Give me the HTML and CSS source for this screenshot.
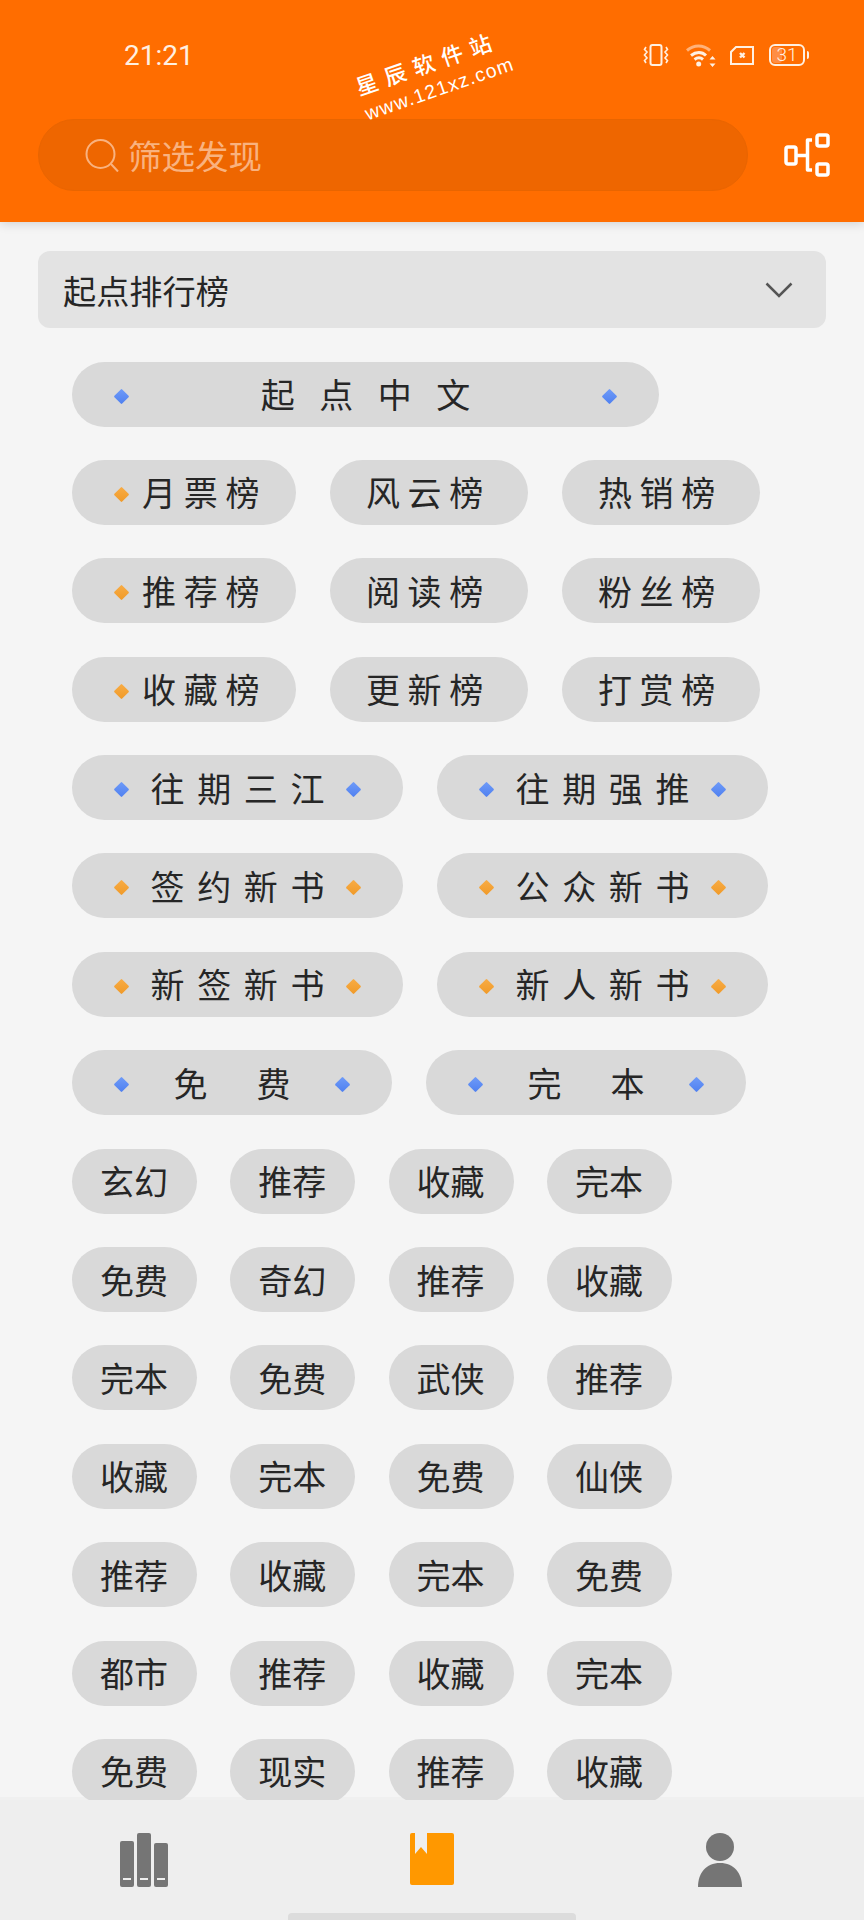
FILE: index.html
```html
<!DOCTYPE html>
<html>
<head>
    <meta charset="UTF-8">
    <title>筛选发现</title>
    <link rel="stylesheet" href="styles.css">
</head>
<body>
    <div class="header">
        <div class="status-bar">
            <span class="status-time">21:21</span>
            <div class="status-icons">
                <svg class="icon-vibrate" width="26" height="22" viewBox="0 0 26 22" fill="none" stroke="#fff0e2" stroke-width="2">
                    <rect x="7.500" y="1" width="11" height="20" rx="2"/>
                    <path d="M3 3l-1.500 2.500 2.500 2.500-2.500 3 2.500 3-2.500 2.500 1.500 2.500M23 3l1.500 2.500-2.500 2.500 2.500 3-2.500 3 2.500 2.500-1.500 2.500" stroke-width="1.600"/>
                </svg>
                <svg class="icon-wifi" width="31" height="23" viewBox="0 0 31 23" fill="none" stroke="#fff0e2" stroke-width="3">
                    <path d="M1 6.500C8 .5 17 .5 24 6.500" stroke="#ffb27a"/>
                    <path d="M5 11.500c5-4 11-4 15 0M8.500 15.500c3-2.200 6-2.200 8.500 0"/>
                    <circle cx="12.700" cy="20" r="2.500" fill="#fff0e2" stroke="none"/>
                    <path d="M26.500 12l3 3.500h-6zM26.500 23l-3-3.500h6z" fill="#fff0e2" stroke="none"/>
                </svg>
                <svg class="icon-sim" width="24" height="19" viewBox="0 0 24 19" fill="none" stroke="#fff0e2" stroke-width="2">
                    <path d="M6 1h17v17H1V6z"/>
                    <path d="M10 7l4.500 4.500M14.500 7L10 11.500" stroke-width="2.400"/>
                </svg>
                <div class="battery">
                    <div class="battery-fill" style="width: 31%"></div>
                    <span class="battery-level">31</span>
                </div>
            </div>
        </div>
        <div class="search-row">
            <div class="search-box">
                <svg class="search-icon" width="34" height="33" viewBox="0 0 34 33" fill="none" stroke="#f9b27f" stroke-width="2">
                    <circle cx="15.500" cy="15" r="14"/>
                    <path d="M26 25l7 7.500"/>
                </svg>
                <span class="search-text">筛选发现</span>
            </div>
            <svg class="tree-icon" width="46" height="44" viewBox="0 0 46 44" fill="none" stroke="#fff" stroke-width="3.500" stroke-linejoin="round">
                <rect x="2" y="14" width="10" height="17" rx="2"/>
                <rect x="33" y="2" width="11" height="11" rx="2"/>
                <rect x="33" y="31" width="11" height="11" rx="2"/>
                <path d="M28 7h-4.500v30H28M12 22.500h11.500"/>
            </svg>
        </div>
    </div>

    <div class="watermark">
        <div class="watermark-name">星辰软件站</div>
        <div class="watermark-url">www.121xz.com</div>
    </div>

    <div class="content">
        <div class="select-box">
            <span>起点排行榜</span>
            <svg width="28" height="16" viewBox="0 0 28 16" fill="none" stroke="#555" stroke-width="2.500">
                <path d="M1.500 1.500L14 14 26.500 1.500"/>
            </svg>
        </div>

        <div class="pill-list">
            <div class="pill-row">
                <div class="pill pill-full"><i class="mark blue"></i><span class="spaced-4">起点中文</span><i class="mark blue"></i></div>
            </div>
            <div class="pill-row">
                <div class="pill pill-lead"><i class="mark orange"></i><span class="spaced-1">月票榜</span></div>
                <div class="pill pill-three"><span class="spaced-1">风云榜</span></div>
                <div class="pill pill-three"><span class="spaced-1">热销榜</span></div>
            </div>
            <div class="pill-row">
                <div class="pill pill-lead"><i class="mark orange"></i><span class="spaced-1">推荐榜</span></div>
                <div class="pill pill-three"><span class="spaced-1">阅读榜</span></div>
                <div class="pill pill-three"><span class="spaced-1">粉丝榜</span></div>
            </div>
            <div class="pill-row">
                <div class="pill pill-lead"><i class="mark orange"></i><span class="spaced-1">收藏榜</span></div>
                <div class="pill pill-three"><span class="spaced-1">更新榜</span></div>
                <div class="pill pill-three"><span class="spaced-1">打赏榜</span></div>
            </div>
            <div class="pill-row">
                <div class="pill pill-half"><i class="mark blue"></i><span class="spaced-2">往期三江</span><i class="mark blue"></i></div>
                <div class="pill pill-half"><i class="mark blue"></i><span class="spaced-2">往期强推</span><i class="mark blue"></i></div>
            </div>
            <div class="pill-row">
                <div class="pill pill-half"><i class="mark orange"></i><span class="spaced-2">签约新书</span><i class="mark orange"></i></div>
                <div class="pill pill-half"><i class="mark orange"></i><span class="spaced-2">公众新书</span><i class="mark orange"></i></div>
            </div>
            <div class="pill-row">
                <div class="pill pill-half"><i class="mark orange"></i><span class="spaced-2">新签新书</span><i class="mark orange"></i></div>
                <div class="pill pill-half"><i class="mark orange"></i><span class="spaced-2">新人新书</span><i class="mark orange"></i></div>
            </div>
            <div class="pill-row">
                <div class="pill pill-pair"><i class="mark blue"></i><span class="spaced-3">免费</span><i class="mark blue"></i></div>
                <div class="pill pill-pair"><i class="mark blue"></i><span class="spaced-3">完本</span><i class="mark blue"></i></div>
            </div>
            <div class="pill-row small-row">
                <div class="pill pill-small">玄幻</div>
                <div class="pill pill-small">推荐</div>
                <div class="pill pill-small">收藏</div>
                <div class="pill pill-small">完本</div>
            </div>
            <div class="pill-row small-row">
                <div class="pill pill-small">免费</div>
                <div class="pill pill-small">奇幻</div>
                <div class="pill pill-small">推荐</div>
                <div class="pill pill-small">收藏</div>
            </div>
            <div class="pill-row small-row">
                <div class="pill pill-small">完本</div>
                <div class="pill pill-small">免费</div>
                <div class="pill pill-small">武侠</div>
                <div class="pill pill-small">推荐</div>
            </div>
            <div class="pill-row small-row">
                <div class="pill pill-small">收藏</div>
                <div class="pill pill-small">完本</div>
                <div class="pill pill-small">免费</div>
                <div class="pill pill-small">仙侠</div>
            </div>
            <div class="pill-row small-row">
                <div class="pill pill-small">推荐</div>
                <div class="pill pill-small">收藏</div>
                <div class="pill pill-small">完本</div>
                <div class="pill pill-small">免费</div>
            </div>
            <div class="pill-row small-row">
                <div class="pill pill-small">都市</div>
                <div class="pill pill-small">推荐</div>
                <div class="pill pill-small">收藏</div>
                <div class="pill pill-small">完本</div>
            </div>
            <div class="pill-row small-row">
                <div class="pill pill-small">免费</div>
                <div class="pill pill-small">现实</div>
                <div class="pill pill-small">推荐</div>
                <div class="pill pill-small">收藏</div>
            </div>
        </div>
    </div>

    <div class="bottom-nav">
        <div class="nav-items">
            <div class="nav-item">
                <svg width="48" height="54" viewBox="0 0 48 54">
                    <rect x="0" y="8" width="14" height="46" rx="2" fill="#757575"/>
                    <rect x="17" y="0" width="14" height="54" rx="2" fill="#757575"/>
                    <rect x="34" y="10" width="14" height="44" rx="2" fill="#757575"/>
                    <path d="M3 46h8M20 46h8M37 46h8" stroke="#eee" stroke-width="2"/>
                </svg>
            </div>
            <div class="nav-item">
                <svg width="44" height="52" viewBox="0 0 44 52">
                    <rect width="44" height="52" rx="2" fill="#ff9800"/>
                    <path d="M5 0h12v21l-6-7-6 7z" fill="#eee"/>
                </svg>
            </div>
            <div class="nav-item">
                <svg width="44" height="54" viewBox="0 0 44 54" fill="#757575">
                    <ellipse cx="22" cy="14" rx="14" ry="14"/>
                    <path d="M0 54C0 40 8 30 22 30s22 10 22 24z"/>
                </svg>
            </div>
        </div>
        <div class="home-bar"></div>
    </div>
</body>
</html>
```

FILE: styles.css
```css
body {
    font-family: "Noto Sans CJK SC", sans-serif;
    margin: 0;
    width: 864px;
    height: 1920px;
    display: flex;
    flex-direction: column;
    overflow: hidden;
    background: #f5f5f5;
    color: #262626;
    position: relative;
}

.header {
    height: 222px;
    flex-shrink: 0;
    background: #ff6d00;
    box-shadow: 0 2px 10px rgba(0, 0, 0, 0.14);
    position: relative;
    z-index: 1;
}

.status-bar {
    height: 119px;
    display: flex;
    justify-content: space-between;
    padding: 38px 59px 0 124px;
    box-sizing: border-box;
}

.status-time {
    font-family: Roboto, sans-serif;
    font-size: 28px;
    line-height: 36px;
    color: #fff0e2;
}

.status-icons {
    display: flex;
    align-items: flex-start;
    padding-top: 6px;
    height: 24px;
}

.icon-vibrate {
    margin-right: 17px;
}

.icon-wifi {
    margin-right: 13px;
}

.icon-sim {
    margin-top: 2px;
    margin-right: 15px;
}

.battery {
    width: 36px;
    height: 22px;
    box-sizing: border-box;
    border: 2px solid #fff0e2;
    border-radius: 6px;
    position: relative;
    display: flex;
    align-items: center;
    justify-content: center;
}

.battery::after {
    content: "";
    position: absolute;
    right: -6px;
    top: 5px;
    width: 2px;
    height: 8px;
    background: #fff0e2;
    border-radius: 0 2px 2px 0;
}

.battery-fill {
    position: absolute;
    left: 1px;
    top: 1px;
    bottom: 1px;
    border-radius: 3px;
    background: #ff8e44;
}

.battery-level {
    font-family: Roboto, sans-serif;
    font-size: 19px;
    font-weight: 300;
    line-height: 18px;
    color: #fff0e2;
    position: relative;
}

.search-row {
    display: flex;
    align-items: flex-start;
    padding-left: 38px;
}

.search-box {
    width: 710px;
    height: 72px;
    box-sizing: border-box;
    border: 1px solid #e96500;
    border-radius: 36px;
    background: #ee6600;
    display: flex;
    align-items: center;
    padding-left: 46px;
}

.search-icon {
    margin-right: 9px;
}

.search-text {
    font-size: 33.500px;
    line-height: 40px;
    color: #f9b27f;
}

.tree-icon {
    margin: 14px 0 0 36px;
}

.watermark {
    position: absolute;
    left: 346px;
    top: 76px;
    color: #fff;
    transform: rotate(-19deg);
    transform-origin: left top;
    z-index: 2;
    white-space: nowrap;
}

.watermark-name {
    font-size: 22px;
    font-weight: 500;
    line-height: 26px;
    letter-spacing: 8px;
    margin-left: 6px;
}

.watermark-url {
    font-family: "Liberation Sans", sans-serif;
    font-size: 19.500px;
    line-height: 22px;
    letter-spacing: 1.200px;
    margin: 5px 0 0 6px;
}

.content {
    flex: 1;
    min-height: 0;
    overflow: hidden;
    padding: 29px 38px 0;
    background: linear-gradient(#f0f0f0, #f0f0f0) left bottom / 100% 3px no-repeat;
}

.select-box {
    height: 77px;
    border-radius: 12px;
    background: #e3e3e3;
    display: flex;
    align-items: center;
    justify-content: space-between;
    padding: 0 33px 0 25px;
    font-size: 33.200px;
}

.pill-list {
    display: flex;
    flex-direction: column;
    gap: 33.400px;
    margin-top: 33.500px;
    padding-left: 34px;
}

.pill-row {
    display: flex;
    gap: 34px;
}

.small-row {
    gap: 33.300px;
}

.pill {
    height: 65px;
    flex-shrink: 0;
    box-sizing: border-box;
    border-radius: 32.500px;
    background: #d9d9d9;
    display: flex;
    align-items: center;
    justify-content: center;
    font-size: 34px;
    line-height: 40px;
}

.pill-full {
    width: 587px;
    justify-content: space-between;
    padding: 0 42px;
}

.pill-lead {
    width: 223.500px;
    justify-content: flex-start;
    padding-left: 42px;
    gap: 13px;
}

.pill-three {
    width: 198px;
}

.pill-half {
    width: 331px;
    justify-content: space-between;
    padding: 0 42px;
}

.pill-pair {
    width: 320px;
    justify-content: space-between;
    padding: 0 42px;
}

.pill-small {
    width: 125px;
    padding-right: 1px;
}

.spaced-1 {
    letter-spacing: 7.750px;
}

.spaced-2 {
    letter-spacing: 12.600px;
    margin-right: -12.600px;
}

.spaced-3 {
    letter-spacing: 49px;
    margin-right: -49px;
}

.spaced-4 {
    letter-spacing: 24.500px;
    margin-right: -24.500px;
}

.mark {
    width: 11px;
    height: 11px;
    margin: 4px 2px 0;
    flex-shrink: 0;
    transform: rotate(45deg);
    border-radius: 1px;
}

.blue {
    background: linear-gradient(135deg, #6f9bf8, #4f80f0);
}

.orange {
    background: linear-gradient(135deg, #f8ac45, #f09a28);
}

.bottom-nav {
    height: 120px;
    flex-shrink: 0;
    background: #eeeeee;
    display: flex;
    flex-direction: column;
    align-items: center;
    position: relative;
}

.nav-items {
    width: 100%;
    display: flex;
    padding-top: 33px;
}

.nav-item {
    flex: 1;
    display: flex;
    justify-content: center;
}

.home-bar {
    position: absolute;
    bottom: 0;
    width: 288px;
    height: 7px;
    border-radius: 4px 4px 0 0;
    background: #dcdcdc;
}
```
